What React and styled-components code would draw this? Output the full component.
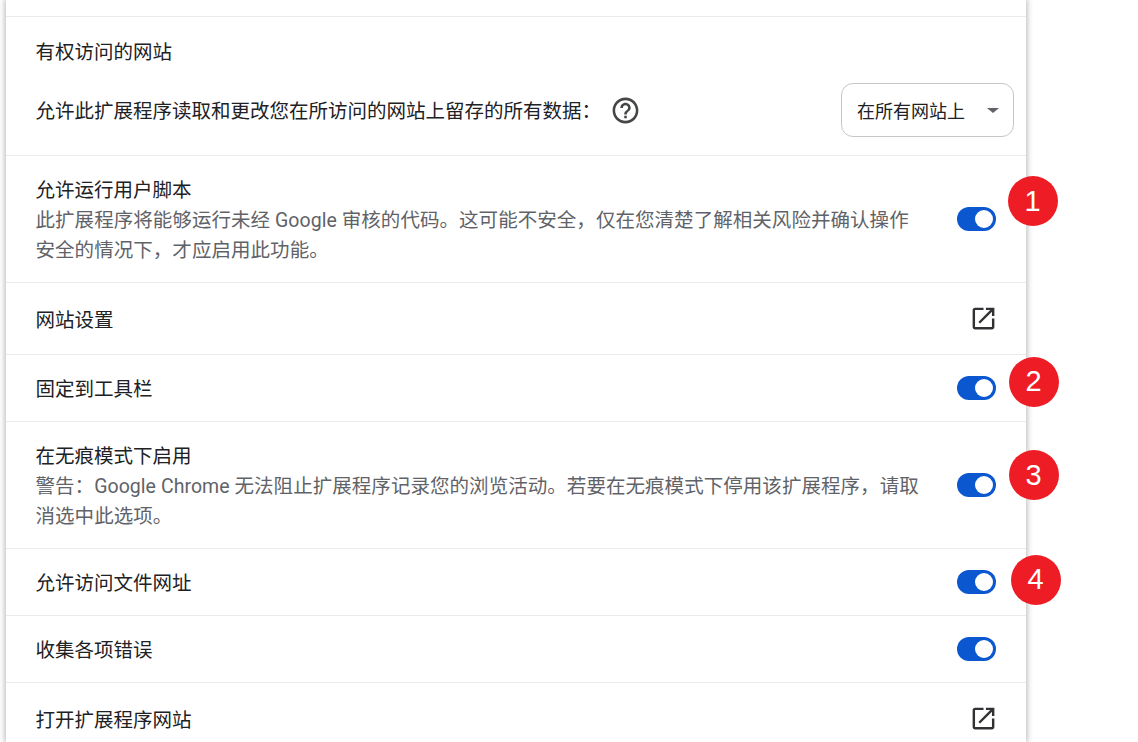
import React from 'react';
import styled, { createGlobalStyle } from 'styled-components';

const GlobalStyle = createGlobalStyle`
  html, body {
    margin: 0;
    padding: 0;
    height: 742px;
    overflow: hidden;
    background: #fff;
    font-family: Roboto, "Noto Sans CJK SC", sans-serif;
  }
`;

const Page = styled.div`
  width: 1138px;
  height: 742px;
  overflow: hidden;
  padding-left: 6px;
  box-sizing: border-box;
`;

const Card = styled.div`
  position: relative;
  width: 1020px;
  height: 742px;
  background: #fff;
  box-shadow: 0 0 6px 1px rgba(60, 64, 67, 0.38);
  display: flex;
  flex-direction: column;
`;

const Row = styled.div`
  box-sizing: border-box;
  height: ${props => props.h}px;
  flex: none;
  border-bottom: 1px solid #ebebeb;
  padding: 0 30px 0 29.5px;
  display: flex;
  align-items: center;
  justify-content: space-between;

  &:last-child {
    border-bottom: none;
  }
`;

const SiteSection = styled(Row)`
  flex-direction: column;
  align-items: stretch;
  justify-content: flex-start;
  padding: 18px 12px 0 29.5px;
`;

const Label = styled.div`
  font-size: 19.5px;
  line-height: 28px;
  padding-top: 4px;
  color: #202124;
`;

const Sub = styled.div`
  font-size: 19.5px;
  line-height: 30px;
  letter-spacing: 0.05px;
  padding-top: 1px;
  color: #5f6368;
  width: 890px;
`;

const TextCol = styled.div`
  display: flex;
  flex-direction: column;
`;

const SiteRow = styled.div`
  display: flex;
  align-items: center;
  justify-content: space-between;
  margin-top: 16px;
`;

const SiteLabel = styled.div`
  display: flex;
  align-items: center;
  gap: 9px;
`;

const Select = styled.div`
  box-sizing: border-box;
  width: 173px;
  height: 54px;
  border: 1px solid #c4c7c5;
  border-radius: 12px;
  display: flex;
  align-items: center;
  justify-content: space-between;
  padding: 0 14px 0 15px;
  font-size: 18px;
  color: #202124;
`;

const Caret = styled.span`
  width: 0;
  height: 0;
  border-left: 6px solid transparent;
  border-right: 6px solid transparent;
  border-top: 5px solid #5f6368;
`;

const Toggle = styled.span`
  box-sizing: border-box;
  flex: none;
  width: 39px;
  height: 24px;
  border-radius: 12px;
  background: #0b57d0;
  display: flex;
  align-items: center;
  justify-content: flex-end;
  padding-right: 3px;

  &::after {
    content: "";
    width: 18px;
    height: 18px;
    border-radius: 50%;
    background: #fff;
  }
`;

const Badge = styled.div`
  position: absolute;
  left: ${props => props.x}px;
  top: ${props => props.y}px;
  width: 50px;
  height: 50px;
  border-radius: 50%;
  background: #ee1c25;
  color: #fff;
  font-family: "Liberation Sans", Arial, sans-serif;
  font-size: 29px;
  display: flex;
  align-items: center;
  justify-content: center;
`;

const IconSlot = styled.span`
  display: flex;
  margin-right: -1.5px;
`;

const HelpIcon = () => (
  <svg width="31" height="31" viewBox="0 0 24 24" fill="#444746">
    <path d="M11 18h2v-2h-2v2zm1-16C6.48 2 2 6.48 2 12s4.48 10 10 10 10-4.48 10-10S17.52 2 12 2zm0 18c-4.41 0-8-3.59-8-8s3.59-8 8-8 8 3.59 8 8-3.59 8-8 8zm0-14c-2.21 0-4 1.79-4 4h2c0-1.1.9-2 2-2s2 .9 2 2c0 2-3 1.75-3 5h2c0-2.25 3-2.5 3-5 0-2.21-1.79-4-4-4z" />
  </svg>
);

const OpenIcon = () => (
  <svg width="29" height="29" viewBox="0 0 24 24" fill="#303134">
    <path d="M19 19H5V5h7V3H5c-1.11 0-2 .9-2 2v14c0 1.1.89 2 2 2h14c1.1 0 2-.9 2-2v-7h-2v7zM14 3v2h3.59l-9.83 9.83 1.41 1.41L19 6.41V10h2V3h-7z" />
  </svg>
);

const App = () => {
  return (
    <Page>
      <GlobalStyle />
      <Card>
        <Row h={17} />
        <SiteSection h={139}>
          <Label>有权访问的网站</Label>
          <SiteRow>
            <SiteLabel>
              <Label>允许此扩展程序读取和更改您在所访问的网站上留存的所有数据：</Label>
              <HelpIcon />
            </SiteLabel>
            <Select>
              在所有网站上
              <Caret />
            </Select>
          </SiteRow>
        </SiteSection>
        <Row h={127}>
          <TextCol>
            <Label>允许运行用户脚本</Label>
            <Sub>此扩展程序将能够运行未经 Google 审核的代码。这可能不安全，仅在您清楚了解相关风险并确认操作安全的情况下，才应启用此功能。</Sub>
          </TextCol>
          <Toggle />
        </Row>
        <Row h={72}>
          <Label>网站设置</Label>
          <IconSlot><OpenIcon /></IconSlot>
        </Row>
        <Row h={67}>
          <Label>固定到工具栏</Label>
          <Toggle />
        </Row>
        <Row h={127}>
          <TextCol>
            <Label>在无痕模式下启用</Label>
            <Sub>警告：Google Chrome 无法阻止扩展程序记录您的浏览活动。若要在无痕模式下停用该扩展程序，请取消选中此选项。</Sub>
          </TextCol>
          <Toggle />
        </Row>
        <Row h={67}>
          <Label>允许访问文件网址</Label>
          <Toggle />
        </Row>
        <Row h={67}>
          <Label>收集各项错误</Label>
          <Toggle />
        </Row>
        <Row h={72}>
          <Label>打开扩展程序网站</Label>
          <IconSlot><OpenIcon /></IconSlot>
        </Row>
        <Badge x={1001.5} y={176}>1</Badge>
        <Badge x={1002.5} y={356.5}>2</Badge>
        <Badge x={1002.5} y={450}>3</Badge>
        <Badge x={1004.5} y={554.5}>4</Badge>
      </Card>
    </Page>
  );
};

export default App;
